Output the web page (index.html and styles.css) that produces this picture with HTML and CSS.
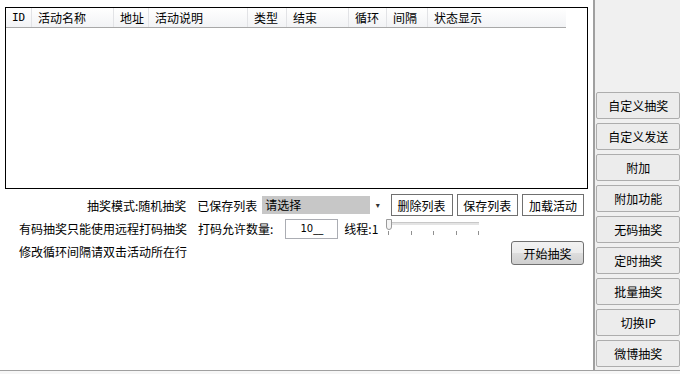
FILE: index.html
```html
<!DOCTYPE html>
<html lang="zh-CN">
<head>
    <meta charset="UTF-8">
    <title>抽奖</title>
    <link rel="stylesheet" href="styles.css">
</head>
<body>
    <div class="window">
        <div class="main">
            <div class="listview">
                <div class="lv-header">
                    <span class="col c-id">ID</span>
                    <span class="col c-name">活动名称</span>
                    <span class="col c-addr">地址</span>
                    <span class="col c-desc">活动说明</span>
                    <span class="col c-type">类型</span>
                    <span class="col c-end">结束</span>
                    <span class="col c-loop">循环</span>
                    <span class="col c-gap">间隔</span>
                    <span class="col c-state">状态显示</span>
                </div>
            </div>

            <div class="row row-1">
                <span class="label">抽奖模式:随机抽奖</span>
                <span class="text">已保存列表</span>
                <div class="combo">
                    <span class="combo-value">请选择</span>
                    <span class="combo-arrow">&#9662;</span>
                </div>
                <button class="btn">删除列表</button>
                <button class="btn">保存列表</button>
                <button class="btn">加载活动</button>
            </div>

            <div class="row row-2">
                <span class="label">有码抽奖只能使用远程打码抽奖</span>
                <span class="text">打码允许数量:</span>
                <div class="num-input">10__</div>
                <span class="threads">线程:1</span>
                <div class="slider">
                    <span class="track"></span>
                    <span class="thumb"></span>
                    <span class="ticks">
                        <i></i><i></i><i></i><i></i><i></i>
                    </span>
                </div>
            </div>

            <div class="row row-3">
                <span class="label">修改循环间隔请双击活动所在行</span>
                <button class="btn btn-start">开始抽奖</button>
            </div>
        </div>

        <div class="side">
            <button class="side-btn">自定义抽奖</button>
            <button class="side-btn">自定义发送</button>
            <button class="side-btn">附加</button>
            <button class="side-btn">附加功能</button>
            <button class="side-btn">无码抽奖</button>
            <button class="side-btn">定时抽奖</button>
            <button class="side-btn">批量抽奖</button>
            <button class="side-btn">切换IP</button>
            <button class="side-btn">微博抽奖</button>
        </div>
    </div>
    <div class="statusbar"></div>
</body>
</html>
```

FILE: styles.css
```css
body {
    margin: 0;
    width: 680px;
    height: 374px;
    overflow: hidden;
    background: #fff;
    font-family: "Noto Sans CJK SC", "DejaVu Sans", sans-serif;
    font-size: 12px;
    color: #000;
}
.window {
    display: flex;
    height: 370px;
}
.main {
    width: 596px;
    padding: 7px 0 0 5px;
    box-sizing: border-box;
}
.listview {
    width: 583px;
    height: 182px;
    border: 1px solid #000;
    box-sizing: border-box;
    background: #fff;
}
.lv-header {
    display: flex;
    width: 560px;
    height: 19px;
    border-bottom: 1px solid #a8a8a8;
    background: linear-gradient(#fff, #f2f3f5);
}
.col {
    box-sizing: border-box;
    padding-left: 6px;
    line-height: 19px;
    border-right: 1px solid #e2e3e6;
    white-space: nowrap;
}
.c-id { width: 26px; font-family: "DejaVu Sans Mono", monospace; font-size: 11px; }
.c-name { width: 82px; }
.c-addr { width: 35px; }
.c-desc { width: 99px; }
.c-type { width: 39px; }
.c-end { width: 62px; }
.c-loop { width: 38px; }
.c-gap { width: 41px; }
.c-state { width: 138px; border-right: none; }

.row {
    display: flex;
    align-items: center;
    width: 579px;
}
.row-1 { height: 22px; margin-top: 5px; }
.row-2 { height: 21px; margin-top: 2px; }
.row-3 { height: 24px; margin-top: 0; }
.label {
    width: 182px;
    text-align: right;
    white-space: nowrap;
}
.text {
    margin-left: 11px;
    white-space: nowrap;
}
.combo {
    display: flex;
    width: 124px;
    height: 18px;
    margin-left: 5px;
    margin-right: 5px;
}
.combo-value {
    flex: 1;
    background: #c7c7c7;
    padding-left: 3px;
    line-height: 18px;
}
.combo-arrow {
    width: 16px;
    text-align: center;
    font-size: 8px;
    line-height: 18px;
    color: #333;
}
.btn {
    width: 62px;
    height: 22px;
    margin-right: 4px;
    padding: 0;
    border: 1px solid #707070;
    background: #fff;
    font: inherit;
    color: #000;
}
.btn:last-child {
    margin-right: 0;
}
.btn-start {
    width: 73px;
    height: 24px;
    margin-left: auto;
    margin-top: 4px;
    border-color: #707070;
    border-radius: 3px;
    background: linear-gradient(#f2f2f2, #ebebeb 50%, #dddddd 51%, #cfcfcf);
}
.num-input {
    width: 53px;
    height: 20px;
    margin-left: 12px;
    box-sizing: border-box;
    border: 1px solid #abadb3;
    text-align: center;
    line-height: 18px;
    font-family: "DejaVu Sans", sans-serif;
    font-size: 10px;
}
.threads {
    margin-left: 6px;
    white-space: nowrap;
}
.slider {
    position: relative;
    width: 93px;
    height: 20px;
    margin-left: 8px;
}
.track {
    position: absolute;
    left: 2px;
    right: 0;
    top: 3px;
    height: 2px;
    background: #e4e4e4;
    border-top: 1px solid #c8c8c8;
}
.thumb {
    position: absolute;
    left: 0;
    top: 0;
    width: 4px;
    height: 9px;
    border: 1px solid #9a9a9a;
    border-radius: 0 0 3px 3px;
    background: #f4f4f4;
}
.ticks {
    position: absolute;
    left: 2px;
    right: 0;
    top: 12px;
    display: flex;
    justify-content: space-between;
}
.ticks i {
    width: 1px;
    height: 4px;
    background: #909090;
}

.side {
    width: 84px;
    border-left: 2px solid #a0a0a0;
    background: #f0f0f0;
    padding: 92px 0 0 1px;
    display: flex;
    flex-direction: column;
    gap: 4px;
    overflow: hidden;
}
.side-btn {
    width: 84px;
    height: 27px;
    padding: 0;
    border: 1px solid #adadad;
    border-radius: 2px;
    background: #ececec;
    font: inherit;
    color: #000;
}
.statusbar {
    height: 3px;
    border-top: 1px solid #a0a0a0;
    background: #f7f7f7;
}
```
